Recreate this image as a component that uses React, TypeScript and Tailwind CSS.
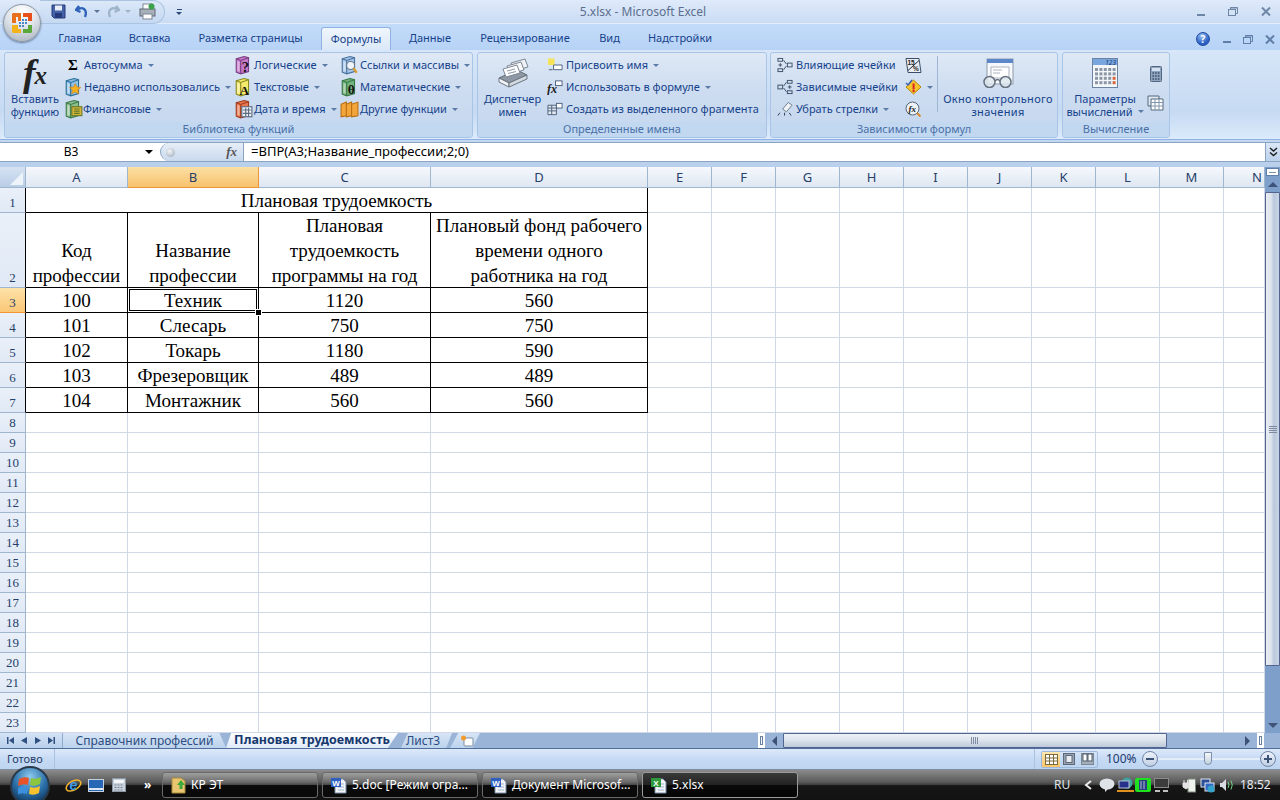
import type { ReactNode } from "react";

const UI = "font-['Noto_Sans','Open_Sans',sans-serif]";

function Caret({ color = "#5a7aa8" }: { color?: string }) {
  return <span className="ml-[5px] inline-block h-0 w-0 shrink-0 border-x-[3px] border-t-[3px] border-x-transparent" style={{ borderTopColor: color }} />;
}

function Book({ fill, spine, children }: { fill: string; spine: string; children?: ReactNode }) {
  return (
    <svg width="19" height="19" viewBox="0 0 17 17" className="shrink-0">
      <path d="M2 2.5 L9 .5 L13 1.5 L13 14 L6 16 L2 14.5 Z" fill={fill} stroke={spine} strokeWidth="1" />
      <path d="M2 2.5 L6 4 L13 1.5 M6 4 L6 16" fill="none" stroke={spine} strokeWidth="1" />
      <path d="M3 4.5 L5 5.2 V14 L3 13.4 Z" fill="#ffffff" fillOpacity=".45" />
      {children}
    </svg>
  );
}

function FxBig() {
  return (
    <span className="flex h-[34px] w-[36px] items-center justify-center font-['Liberation_Serif',serif] text-[38px] font-bold italic leading-none text-[#222]">
      f<span className="-ml-[1px] mt-[5px] text-[25px]">x</span>
    </span>
  );
}

function NameManagerIcon() {
  return (
    <svg width="32" height="30" viewBox="0 0 32 30">
      <path d="M2 20 L20 12 L30 17 L12 25 Z" fill="#8d98a4" stroke="#5f6a76" />
      <path d="M2 20 L12 25 L12 29 L2 24 Z" fill="#f2f4f7" stroke="#6b7580" />
      <path d="M12 25 L30 17 L30 21 L12 29 Z" fill="#d3d9e0" stroke="#6b7580" />
      <path d="M14 5 L28 1 L31 9 L17 13 Z" fill="#eef1f5" stroke="#7c8794" />
      <path d="M10 8 L24 4 L27 12 L13 16 Z" fill="#f8f9fb" stroke="#7c8794" />
      <path d="M6 11 L20 7 L23 15 L9 19 Z" fill="#ffffff" stroke="#7c8794" />
      <path d="M10 13 L18 11 M11 15.5 L19 13.5" stroke="#8a97a6" />
    </svg>
  );
}

function WatchIcon() {
  return (
    <svg width="32" height="30" viewBox="0 0 32 30">
      <rect x="5" y="1" width="26" height="25" fill="#f6f8fb" stroke="#8d9bac" />
      <rect x="5" y="1" width="26" height="4" fill="#5c87c9" />
      <path d="M9 9 H27 V20 H9 Z" fill="#fff" stroke="#a9b4c1" />
      <path d="M11 12 H20 M11 15 H18" stroke="#a9b4c1" />
      <circle cx="7.5" cy="24" r="5.5" fill="#dfe7ef" fillOpacity=".8" stroke="#66727f" strokeWidth="1.5" />
      <circle cx="23.5" cy="24" r="5.5" fill="#dfe7ef" fillOpacity=".8" stroke="#66727f" strokeWidth="1.5" />
      <path d="M13 23 Q15.5 20 18 23" fill="none" stroke="#66727f" strokeWidth="1.5" />
    </svg>
  );
}

function CalcOptionsIcon() {
  const cells = [0, 1, 2, 3, 4];
  return (
    <svg width="26" height="30" viewBox="0 0 26 30">
      <rect x=".5" y=".5" width="25" height="29" fill="#f3f6fa" stroke="#6b84a4" />
      <path d="M1 1 H25 V7 H1 Z" fill="#7aa6e0" />
      <text x="24" y="7" textAnchor="end" fontSize="6.5" fontStyle="italic" fill="#173a70">123</text>
      {cells.map((c) => [0, 1, 2, 3].map((r) => (
        <rect key={`${c}-${r}`} x={3 + c * 4.4} y={10 + r * 4.4} width="3" height="3" fill={c === 4 && r > 1 ? "#d8653a" : "#8c97a5"} />
      )))}
    </svg>
  );
}

function OfficeOrb() {
  return (
    <div className="absolute left-[3px] top-[4px] flex h-[38px] w-[38px] items-center justify-center rounded-full border border-[#8f9aa8] bg-[radial-gradient(circle_at_50%_20%,#ffffff,#dfe4ea_45%,#a3adb9_100%)] shadow-[0_1px_2px_rgba(40,60,90,.6)]">
      <svg width="24" height="24" viewBox="0 0 24 24">
        <path d="M3 2 H11 V10 H8 V6 H6 V12 H2 V3 Z" fill="#e8701a" />
        <path d="M13 2 H22 V10 H18 V6 H13 Z" fill="#e8501a" />
        <path d="M2 14 H8 V18 H11 V22 H3 L2 21 Z" fill="#f2b31c" />
        <path d="M18 14 H22 V21 L21 22 H13 V18 H18 Z" fill="#5aa83a" />
        <g fill="#4a86c5">
          <rect x="12" y="8" width="2" height="2" /><rect x="15" y="8" width="2" height="2" />
          <rect x="9" y="11" width="2" height="2" /><rect x="12" y="11" width="2" height="2" /><rect x="15" y="11" width="2" height="2" />
          <rect x="9" y="14" width="2" height="2" /><rect x="12" y="14" width="2" height="2" />
        </g>
      </svg>
    </div>
  );
}

function QuickAccess() {
  return (
    <div className="ml-[40px] flex h-[24px] w-[125px] items-center rounded-r-[12px] border border-l-0 border-[#aac3e2] bg-[linear-gradient(#dbe8f8,#c5d9f2)] pl-[11px]">
      <svg width="15" height="15" viewBox="0 0 15 15">
        <path d="M1 1 H14 V14 H3 L1 12 Z" fill="#4561a8" stroke="#26397a" />
        <rect x="4" y="1.5" width="7" height="5" fill="#e8eef8" />
        <rect x="4" y="9" width="7" height="5" fill="#26397a" />
      </svg>
      <svg width="14" height="14" viewBox="0 0 14 14" className="ml-[9px]">
        <path d="M4 1 L1 5 L5.5 7 M2 5 C7 1 13 4 10 12" fill="none" stroke="#2f63b8" strokeWidth="2.4" />
      </svg>
      <Caret color="#5c7296" />
      <svg width="14" height="14" viewBox="0 0 14 14" className="ml-[6px]">
        <path d="M10 1 L13 5 L8.5 7 M12 5 C7 1 1 4 4 12" fill="none" stroke="#9fb3c9" strokeWidth="2.4" />
      </svg>
      <Caret color="#9eb1c8" />
      <svg width="17" height="17" viewBox="0 0 17 17" className="ml-[8px]">
        <rect x="4" y="1" width="9" height="6" fill="#fff" stroke="#7d8794" />
        <rect x="1" y="6" width="15" height="7" fill="#a7b0bb" stroke="#5e6874" />
        <rect x="4" y="11" width="9" height="5" fill="#fff" stroke="#7d8794" />
        <circle cx="12.5" cy="3.5" r="3" fill="#3aa04a" />
      </svg>
    </div>
  );
}

function TitleBar() {
  return (
    <div className="flex h-[24px] items-center border-b border-[#e4eefa] bg-[linear-gradient(#dfeafa,#cadcf3)]">
      <QuickAccess />
      <div className="ml-[9px] flex w-[10px] flex-col items-center gap-[2px]">
        <span className="h-px w-[5px] bg-[#2b4a78]" />
        <span className="h-0 w-0 border-x-[3px] border-t-[3px] border-x-transparent border-t-[#2b4a78]" />
      </div>
      <div className="ml-[379px] w-[160px] whitespace-nowrap text-center text-[12px] text-[#5c6f8e]">5.xlsx - Microsoft Excel</div>
      <WindowButtons className="ml-[474px] gap-[23px]" dark={false} />
    </div>
  );
}

function WindowButtons({ className, dark }: { className: string; dark: boolean }) {
  const c = dark ? "#5f7fa6" : "#6e86a6";
  return (
    <div className={`flex items-center ${className}`}>
      <span className="mt-[6px] h-[2px] w-[8px]" style={{ background: c }} />
      <svg width="10" height="9" viewBox="0 0 10 9">
        <rect x=".5" y="2.5" width="7" height="6" fill="none" stroke={c} />
        <path d="M2.5 2.5 V.5 H9.5 V6.5 H7.5 M2.5 1 H9.5" fill="none" stroke={c} />
      </svg>
      <svg width="10" height="9" viewBox="0 0 10 9">
        <path d="M1 .5 L9 8.5 M9 .5 L1 8.5" stroke={c} strokeWidth="2" />
      </svg>
    </div>
  );
}

function TabsRow() {
  const tabs = [
    { t: "Главная", w: "w-[70px]" },
    { t: "Вставка", w: "w-[69px]" },
    { t: "Разметка страницы", w: "w-[133px]" },
    { t: "Формулы", w: "ml-[4px] w-[70px]", active: true },
    { t: "Данные", w: "w-[78px]" },
    { t: "Рецензирование", w: "w-[112px]" },
    { t: "Вид", w: "w-[57px]" },
    { t: "Надстройки", w: "w-[84px]" },
  ];
  return (
    <div className="flex h-[26px] items-end bg-[linear-gradient(#c4dcf9,#b6d2f6)] pl-[45px]">
      {tabs.map((x) => (
        <div key={x.t} className={`${x.w} flex h-[23px] items-center justify-center text-[11px] text-[#15428b] ${x.active ? "rounded-t-[3px] border border-b-0 border-[#8db2e3] bg-[linear-gradient(#f0f6fd,#dbe8f8)]" : ""}`}>
          {x.t}
        </div>
      ))}
      <div className="ml-auto mb-[4px] flex items-center pr-[5px]">
        <span className="flex h-[14px] w-[14px] items-center justify-center rounded-full border border-[#1f4aa0] bg-[radial-gradient(circle_at_40%_25%,#9cc2f2,#2a5fc4_65%)] text-[10px] font-bold leading-none text-white">?</span>
        <WindowButtons className="ml-[13px] gap-[12px]" dark />
      </div>
    </div>
  );
}

function Group({ w, ml, label, children }: { w: string; ml: string; label: string; children: ReactNode }) {
  return (
    <div className={`${w} ${ml} flex h-[86px] shrink-0 flex-col overflow-hidden rounded-[3px] border border-[#a8c4e6] bg-[linear-gradient(#dfe9f6,#cddcf0_45%,#c5d8ef)]`}>
      <div className="flex h-[69px]">{children}</div>
      <div className="flex h-[15px] items-center justify-center bg-[#c1d8f0] text-[11px] text-[#4a70a8]">{label}</div>
    </div>
  );
}

function Row({ icon, text, caret = true, gap = "ml-[3px]" }: { icon: ReactNode; text: string; caret?: boolean; gap?: string }) {
  return (
    <div className="flex h-[22px] items-center whitespace-nowrap text-[11px] text-[#15428b]">
      <span className="flex w-[16px] shrink-0 items-center justify-center">{icon}</span>
      <span className={gap}>{text}</span>
      {caret && <Caret />}
    </div>
  );
}

function BigButton({ w, icon, lines, caret }: { w: string; icon: ReactNode; lines: string[]; caret?: boolean }) {
  return (
    <div className={`${w} flex shrink-0 flex-col items-center text-center text-[11px] leading-[13px] text-[#15428b]`}>
      <div className="flex h-[39px] items-center justify-center">{icon}</div>
      <div className="whitespace-nowrap">{lines[0]}</div>
      <div className="flex items-center whitespace-nowrap">{lines[1]}{caret && <Caret />}</div>
    </div>
  );
}

function Ribbon() {
  return (
    <div className="flex h-[90px] items-start border-b border-[#8db2e3] bg-[linear-gradient(#d7e6f8,#c6daf2_70%,#dcebfb)] pt-[2px]">
      <Group w="w-[469px]" ml="ml-[4px]" label="Библиотека функций">
        <BigButton w="w-[60px]" icon={<FxBig />} lines={["Вставить", "функцию"]} />
        <div className="w-[170px] pt-px">
          <Row text="Автосумма" icon={<span className="font-['Liberation_Serif',serif] text-[15px] font-bold leading-none text-black">Σ</span>} />
          <Row text="Недавно использовались" icon={<Book fill="#8fc0e8" spine="#2c6f99"><path d="M10 5 L11.5 8 L15 8.4 L12.5 10.8 L13.2 14.2 L10 12.5 L6.8 14.2 L7.5 10.8 L5 8.4 L8.5 8 Z" fill="#f4b01e" stroke="#c57a10" strokeWidth=".5" /></Book>} />
          <Row text="Финансовые" gap="ml-[2px]" icon={<Book fill="#8dbf8d" spine="#3d7a4a"><rect x="7" y="6" width="9" height="8" fill="#d8b436" stroke="#6a7a2a" /><path d="M9 8 H14 M9 10 H14 M9 12 H14" stroke="#5a7a2a" /></Book>} />
        </div>
        <div className="w-[106px] pt-px">
          <Row text="Логические" icon={<Book fill="#c67ac8" spine="#7a3f85"><text x="7" y="14.5" fontSize="13" fontWeight="700" fill="#111" fontFamily="Liberation Serif">?</text></Book>} />
          <Row text="Текстовые" icon={<Book fill="#f5ea6c" spine="#8a8a20"><text x="5" y="15" fontSize="12" fontWeight="700" fill="#111" fontFamily="Liberation Serif">A</text></Book>} />
          <Row text="Дата и время" icon={<Book fill="#e8764e" spine="#a33c1e"><rect x="7" y="6" width="9" height="9" fill="#eef2f8" stroke="#5a6a80" /><path d="M8 9 H15 M8 12 H15 M10.5 7 V15 M13 7 V15" stroke="#5a6a80" /></Book>} />
        </div>
        <div className="w-[127px] pt-px">
          <Row text="Ссылки и массивы" icon={<Book fill="#a5c5e8" spine="#4a72a0"><circle cx="9.5" cy="8.5" r="3.6" fill="#eef4fa" stroke="#66788c" /><path d="M12 11 L15 15" stroke="#d99a2a" strokeWidth="2" /></Book>} />
          <Row text="Математические" icon={<Book fill="#74b27c" spine="#3a7a48"><text x="7" y="14.5" fontSize="12" fontWeight="700" fill="#111" fontFamily="Liberation Serif">θ</text></Book>} />
          <Row text="Другие функции" icon={<svg width="19" height="17" viewBox="0 0 18 16" className="shrink-0"><path d="M1 3 L6 1 L6 14 L1 15 Z M6 3 L11 1 L11 14 L6 15 Z M11 3 L17 1 L17 14 L11 15 Z" fill="#f3a53c" stroke="#b86e10" /></svg>} />
        </div>
      </Group>
      <Group w="w-[290px]" ml="ml-[4px]" label="Определенные имена">
        <BigButton w="w-[69px]" icon={<NameManagerIcon />} lines={["Диспетчер", "имен"]} />
        <div className="pt-px">
          <Row text="Присвоить имя" icon={<svg width="17" height="16" viewBox="0 0 17 16"><rect x="1" y="1" width="7" height="7" fill="#f7e35a" /><path d="M2 13 H6 M7 8 H16 V13 H7 Z" fill="#fff" stroke="#4a5f7c" /></svg>} />
          <Row text="Использовать в формуле" icon={<svg width="17" height="16" viewBox="0 0 17 16"><text x="0" y="14" fontSize="13" fontWeight="700" fontStyle="italic" fill="#222" fontFamily="Liberation Serif">fx</text><rect x="9" y="1.5" width="7" height="5" fill="#fff" stroke="#4a5f7c" /></svg>} />
          <Row text="Создать из выделенного фрагмента" caret={false} icon={<svg width="17" height="14" viewBox="0 0 17 14"><path d="M1 3 H10 V13 H1 Z" fill="#e4e9f0" stroke="#4a5f7c" /><path d="M1 6 H10 M1 9 H10 M5 3 V13" stroke="#4a5f7c" /><rect x="10" y="1" width="6" height="5" fill="#fff" stroke="#4a5f7c" /></svg>} />
        </div>
      </Group>
      <Group w="w-[288px]" ml="ml-[3px]" label="Зависимости формул">
        <div className="w-[134px] shrink-0 pl-[6px] pt-px">
          <Row text="Влияющие ячейки" caret={false} icon={<svg width="17" height="16" viewBox="0 0 17 16" fill="none" stroke="#3d4f66"><rect x="1" y="1" width="5" height="3" /><rect x="1" y="12" width="5" height="3" /><path d="M3.5 6 V10 M1.5 8 H5.5 M7 3 L10 7 M7 13 L10 9" /><rect x="11" y="6" width="5" height="4" /></svg>} />
          <Row text="Зависимые ячейки" caret={false} icon={<svg width="17" height="16" viewBox="0 0 17 16" fill="none" stroke="#3d4f66"><rect x="1" y="6" width="5" height="4" /><path d="M7 7 L10 3 M7 9 L10 13 M13.5 6 V10 M11.5 8 H15.5" /><rect x="11" y="1" width="5" height="3" /><rect x="11" y="12" width="5" height="3" /></svg>} />
          <Row text="Убрать стрелки" icon={<svg width="17" height="16" viewBox="0 0 17 16"><path d="M6 8 L12 1 L16 4 L10 11 Z" fill="#f1f3f6" stroke="#69788a" /><path d="M1 15 L3 12 M8 15 V12 M15 15 L13 12" stroke="#2c3a4c" /></svg>} />
        </div>
        <div className="flex w-[32px] shrink-0 flex-col items-start pt-px">
          <div className="flex h-[22px] items-center"><svg width="17" height="17" viewBox="0 0 17 16"><path d="M1 1 H14 L16 15 H3 Z" fill="#e8edf3" stroke="#3d4f66" /><text x="2.5" y="7.5" fontSize="6.5" fontWeight="700" fill="#222" fontFamily="Liberation Sans">15</text><text x="8" y="13.5" fontSize="6.5" fontWeight="700" fill="#222" fontFamily="Liberation Sans">%</text><path d="M3 13 L14 3" stroke="#1e2a3a" strokeWidth="1" /></svg></div>
          <div className="flex h-[22px] items-center"><svg width="17" height="16" viewBox="0 0 17 16"><path d="M8.5 1 L16 8 L8.5 15 L1 8 Z" fill="#f4c42e" stroke="#b8860b" /><rect x="7.6" y="4.5" width="2" height="6" fill="#d22" /><rect x="7.6" y="11" width="2" height="2" fill="#d22" /><path d="M1 4 L3 6 L7 1" fill="none" stroke="#3a62b8" strokeWidth="1.5" /></svg><Caret /></div>
          <div className="flex h-[22px] items-center"><svg width="17" height="16" viewBox="0 0 17 16"><circle cx="7.5" cy="7.5" r="6.5" fill="#eef2f6" stroke="#55667a" /><text x="3.5" y="11" fontSize="9" fontWeight="700" fontStyle="italic" fontFamily="Liberation Serif" fill="#222">fx</text><path d="M12 12 L15.5 15.5" stroke="#d78a2a" strokeWidth="2" /></svg></div>
        </div>
        <div className="my-[3px] h-[56px] w-px shrink-0 bg-[#9db6d6]" />
        <BigButton w="w-[120px] tracking-[.3px]" icon={<WatchIcon />} lines={["Окно контрольного", "значения"]} />
      </Group>
      <Group w="w-[108px]" ml="ml-[4px]" label="Вычисление">
        <BigButton w="w-[84px]" icon={<CalcOptionsIcon />} lines={["Параметры", "вычислений"]} caret />
        <div className="flex flex-col items-center pt-px">
          <div className="flex h-[28px] items-end"><svg width="12" height="16" viewBox="0 0 12 16"><rect x=".5" y=".5" width="11" height="15" rx="1" fill="#8ea4c0" stroke="#55687f" /><rect x="2" y="2" width="8" height="3" fill="#d4e1f0" /><path d="M2.5 7 H9.5 M2.5 10 H9.5 M2.5 13 H9.5" stroke="#3a4c64" strokeDasharray="1.5 1.2" strokeWidth="1.5" /></svg></div>
          <div className="mt-[13px] flex items-center"><svg width="17" height="17" viewBox="0 0 17 17"><path d="M1 1 H12 V11 H1 Z" fill="#dfe8f2" stroke="#55687f" /><path d="M4 4 H16 V15 H4 Z" fill="#fff" stroke="#55687f" /><path d="M4 7.5 H16 M4 11 H16 M8 4 V15 M12 4 V15" stroke="#8296ad" /></svg></div>
        </div>
      </Group>
    </div>
  );
}

function FormulaBar() {
  return (
    <div className="h-[27px] bg-[linear-gradient(#c4d8f0,#b8cfeb)] pt-[2px]">
      <div className="flex h-[20px] border-y border-[#8aa4c2] bg-white">
        <div className="relative flex w-[160px] shrink-0 items-center justify-center pr-[18px] text-[12px] text-black">
          B3
          <span className="absolute left-[145px] top-[7px] h-0 w-0 border-x-[4px] border-t-[4px] border-x-transparent border-t-black" />
        </div>
        <div className="flex w-[84px] shrink-0 items-center justify-between rounded-l-[9px] border-x border-[#8aa4c2] bg-[linear-gradient(#e7eef8,#c9d9ee)] pl-[5px] pr-[6px]">
          <span className="h-[9px] w-[9px] rounded-full bg-[radial-gradient(circle_at_40%_35%,#f4f6f8,#9aa6b4)]" />
          <span className="font-['Liberation_Serif',serif] text-[13px] font-bold italic text-[#555]">fx</span>
        </div>
        <div className="flex min-w-0 flex-1 items-center pl-[7px] text-[13px] text-black">=ВПР(А3;Название_профессии;2;0)</div>
        <div className="flex w-[15px] shrink-0 items-center justify-center border-l border-[#8aa4c2] bg-[linear-gradient(#dbe7f6,#bcd1ec)]">
          <svg width="9" height="10" viewBox="0 0 9 10" fill="none" stroke="#222" strokeWidth="1.5"><path d="M1 1 L4.5 4 L8 1 M1 5.5 L4.5 8.5 L8 5.5" /></svg>
        </div>
      </div>
    </div>
  );
}

const cols = [
  { k: "A", w: "w-[102px]" }, { k: "B", w: "w-[131px]" }, { k: "C", w: "w-[172px]" }, { k: "D", w: "w-[217px]" },
  { k: "E", w: "w-[64px]" }, { k: "F", w: "w-[64px]" }, { k: "G", w: "w-[64px]" }, { k: "H", w: "w-[64px]" },
  { k: "I", w: "w-[64px]" }, { k: "J", w: "w-[64px]" }, { k: "K", w: "w-[64px]" }, { k: "L", w: "w-[64px]" },
  { k: "M", w: "w-[64px]" }, { k: "N", w: "w-[41px]" },
];
const restCols = cols.slice(4);

const body = [
  ["100", "Техник", "1120", "560"],
  ["101", "Слесарь", "750", "750"],
  ["102", "Токарь", "1180", "590"],
  ["103", "Фрезеровщик", "489", "489"],
  ["104", "Монтажник", "560", "560"],
];

const head = [
  ["Код", "профессии"],
  ["Название", "профессии"],
  ["Плановая", "трудоемкость", "программы на год"],
  ["Плановый фонд рабочего", "времени одного", "работника на год"],
];

function RowHeader({ n, active, inTable }: { n: number; active?: boolean; inTable?: boolean }) {
  return (
    <div className={`flex w-[26px] shrink-0 items-end justify-center border-b border-r pb-px text-[13px] leading-[16px] ${active ? "border-b-[#f29536] bg-[linear-gradient(#fde3a8,#fbc777)] text-[#26406a]" : "border-b-[#9eb6ce] bg-[linear-gradient(#eaf0f9,#e0e9f5)] text-[#26406a]"} ${inTable ? "border-r-black" : "border-r-[#9eb6ce]"}`}>
      {n}
    </div>
  );
}

function RestCells() {
  return (
    <>
      {restCols.map((c) => <div key={c.k} className={`${c.w} shrink-0 border-b border-r border-[#d0d7e5]`} />)}
    </>
  );
}

function Sheet() {
  const emptyRows = Array.from({ length: 16 }, (_, i) => i + 8);
  return (
    <div className="w-[1265px] shrink-0 bg-white font-['Liberation_Serif',serif] text-[19px] leading-[25px] text-black">
      <div className={`flex h-[21px] ${UI}`}>
        <div className="flex w-[26px] shrink-0 items-end justify-end border-b border-r border-[#9eb6ce] bg-[linear-gradient(#d5e2f2,#b9cde6)] p-[2px]">
          <span className="h-0 w-0 border-b-[13px] border-l-[13px] border-b-[#eef3fa] border-l-transparent" />
        </div>
        {cols.map((c) => (
          <div key={c.k} className={`${c.w} flex shrink-0 items-center border-b border-r text-[13px] text-[#26406a] ${c.k === "N" ? "justify-start pl-[28px]" : "justify-center"} ${c.k === "B" ? "border-[#f29536] bg-[linear-gradient(#fbe0a4,#f8c26d)]" : "border-[#9eb6ce] bg-[linear-gradient(#f5f8fc,#dfe7f2)]"}`}>
            {c.k}
          </div>
        ))}
      </div>

      <div className="flex h-[25px]">
        <RowHeader n={1} inTable />
        <div className="flex w-[622px] shrink-0 items-center justify-center whitespace-nowrap border-b border-r border-black">Плановая трудоемкость</div>
        <RestCells />
      </div>

      <div className="flex h-[75px]">
        <RowHeader n={2} inTable />
        {head.map((lines, i) => (
          <div key={i} className={`${cols[i].w} flex shrink-0 flex-col items-center justify-end border-b border-r border-black`}>
            <div className="-mb-px flex flex-col items-center">
              {lines.map((l) => <div key={l} className="whitespace-nowrap">{l}</div>)}
            </div>
          </div>
        ))}
        <RestCells />
      </div>

      {body.map((row, r) => (
        <div key={r} className="flex h-[25px]">
          <RowHeader n={r + 3} active={r === 0} inTable />
          {row.map((v, i) => (
            <div key={i} className={`${cols[i].w} relative flex shrink-0 items-center justify-center border-b border-r border-black`}>
              {r === 0 && i === 1 && (
                <>
                  <span className="absolute inset-0 border border-white" />
                  <span className="absolute inset-px border border-black" />
                  <span className="absolute bottom-[-3px] right-[-3px] z-10 h-[5px] w-[5px] bg-black outline outline-1 outline-white" />
                </>
              )}
              {v}
            </div>
          ))}
          <RestCells />
        </div>
      ))}

      {emptyRows.map((n) => (
        <div key={n} className="flex h-[20px]">
          <RowHeader n={n} />
          {cols.map((c) => <div key={c.k} className={`${c.w} shrink-0 border-b border-r border-[#d0d7e5]`} />)}
        </div>
      ))}
    </div>
  );
}

function VScroll() {
  return (
    <div className="flex w-[15px] shrink-0 flex-col bg-[#7f9fcb]">
      <div className="mx-[1px] mt-[1px] flex h-[8px] items-center justify-center border border-[#5f7fa8] bg-white">
        <span className="h-px w-[7px] bg-[#7f93ad]" />
      </div>
      <div className="flex h-[16px] items-center justify-center">
        <span className="h-0 w-0 border-x-[5px] border-b-[5px] border-x-transparent border-b-[#3f5378]" />
      </div>
      <div className="flex h-[474px] flex-col items-center justify-center gap-[1px] rounded-[1px] border border-[#52648f] bg-[linear-gradient(90deg,#e8edf3,#dde3ec_40%,#b9c8dc_60%,#c9d5e5)]">
        <span className="h-px w-[8px] bg-[#7f8ba0]" />
        <span className="h-px w-[8px] bg-[#7f8ba0]" />
        <span className="h-px w-[8px] bg-[#7f8ba0]" />
        <span className="h-px w-[8px] bg-[#7f8ba0]" />
      </div>
      <div className="flex flex-1 items-end justify-center pb-[5px]">
        <span className="h-0 w-0 border-x-[5px] border-t-[5px] border-x-transparent border-t-[#3f5378]" />
      </div>
    </div>
  );
}

function SheetTabs() {
  return (
    <div className="flex h-[16px] items-stretch border-b border-[#4e6e9c] bg-[#9ab4d8] text-[12px] leading-none">
      <div className="flex w-[62px] shrink-0 items-center justify-around bg-[linear-gradient(#d4e3f6,#b8cfeb)] px-[3px]">
        <svg width="7" height="7" viewBox="0 0 7 7" fill="#2f4f80"><path d="M0 0 H1.5 V7 H0 Z M7 0 V7 L2 3.5 Z" /></svg>
        <svg width="6" height="7" viewBox="0 0 6 7" fill="#2f4f80"><path d="M6 0 V7 L0 3.5 Z" /></svg>
        <svg width="6" height="7" viewBox="0 0 6 7" fill="#2f4f80"><path d="M0 0 V7 L6 3.5 Z" /></svg>
        <svg width="7" height="7" viewBox="0 0 7 7" fill="#2f4f80"><path d="M5.5 0 H7 V7 H5.5 Z M0 0 V7 L5 3.5 Z" /></svg>
      </div>
      <div className="flex w-[164px] shrink-0 items-center justify-center border-l border-[#8eabd0] bg-[linear-gradient(#d7e5f6,#bcd2ec)] text-[#2c4d80] [clip-path:polygon(0_0,96%_0,100%_100%,0_100%)]">Справочник профессий</div>
      <div className="flex w-[172px] shrink-0 items-center justify-center bg-[linear-gradient(#ffffff,#dfeafa)] text-[12.5px] font-bold text-[#15386e] [clip-path:polygon(0_100%,3%_0,100%_0,94%_100%)]">Плановая трудоемкость</div>
      <div className="-ml-[4px] flex w-[58px] shrink-0 items-center justify-center bg-[linear-gradient(#d7e5f6,#bcd2ec)] text-[#2c4d80] [clip-path:polygon(12%_100%,24%_0,100%_0,90%_100%)]">Лист3</div>
      <div className="-ml-[6px] flex w-[34px] shrink-0 items-center justify-center bg-[linear-gradient(#d7e5f6,#bcd2ec)] pl-[8px] [clip-path:polygon(12%_100%,36%_0,100%_0,78%_100%)]">
        <svg width="14" height="12" viewBox="0 0 14 12"><rect x="4" y="3" width="9" height="8" rx="1" fill="#fff" stroke="#7d8da3" /><circle cx="3.5" cy="3" r="2.5" fill="#f19b2c" /></svg>
      </div>
      <div className="flex-1" />
      <div className="flex w-[7px] shrink-0 items-center justify-center bg-white"><span className="h-[9px] w-[3px] border border-[#6a7f9d]" /></div>
      <div className="flex w-[18px] shrink-0 items-center justify-center"><span className="h-0 w-0 border-y-[5px] border-r-[5px] border-y-transparent border-r-[#3f5378]" /></div>
      <div className="flex w-[384px] shrink-0 items-center justify-center rounded-[1px] border border-[#52648f] bg-[linear-gradient(#eef2f7,#dfe5ed_45%,#bcc9da)]">
        <span className="h-[7px] w-[8px] bg-[repeating-linear-gradient(90deg,#7f8ba0_0,#7f8ba0_1px,transparent_1px,transparent_2px)]" />
      </div>
      <div className="flex w-[90px] shrink-0 items-center justify-end pr-[7px]"><span className="h-0 w-0 border-y-[5px] border-l-[5px] border-y-transparent border-l-[#3f5378]" /></div>
      <div className="mr-[16px] flex w-[7px] shrink-0 items-center justify-center bg-white"><span className="h-[9px] w-[3px] border border-[#6a7f9d]" /></div>
    </div>
  );
}

function StatusBar() {
  return (
    <div className="flex h-[21px] items-center border-b border-[#7d8ea3] bg-[linear-gradient(#dde9f9,#c6daf4_50%,#bdd4f0)] text-[#15386e]">
      <div className="flex h-full w-[55px] items-center border-r border-[#a9c2e2] pl-[7px] text-[11px] text-[#26406a]">Готово</div>
      <div className="ml-[979px] flex h-full w-[246px] items-center border-l border-[#a9c2e2] pl-[6px]">
        <div className="flex h-[17px] w-[57px] items-center overflow-hidden rounded-[2px] border border-[#9db8da]">
          <div className="flex h-full w-[19px] items-center justify-center bg-[linear-gradient(#fde8b0,#f9c66a)]">
            <svg width="13" height="11" viewBox="0 0 13 11"><rect x=".5" y=".5" width="12" height="10" fill="#fff" stroke="#7a6a3a" /><path d="M.5 4 H12.5 M.5 7 H12.5 M4.5 .5 V10.5 M8.5 .5 V10.5" stroke="#7a6a3a" /></svg>
          </div>
          <div className="flex h-full w-[19px] items-center justify-center"><svg width="12" height="12" viewBox="0 0 12 12"><rect x=".5" y=".5" width="11" height="11" fill="#98a4b3" stroke="#5d6978" /><rect x="3" y="2.5" width="6" height="7" fill="#e9edf2" stroke="#5d6978" /></svg></div>
          <div className="flex h-full w-[19px] items-center justify-center"><svg width="13" height="12" viewBox="0 0 13 12"><rect x=".5" y=".5" width="12" height="11" fill="#a4aebb" stroke="#7c8796" /><rect x="2" y="1" width="4" height="7" fill="#fff" stroke="#4e5a68" /><rect x="7" y="1" width="4" height="7" fill="#fff" stroke="#4e5a68" /></svg></div>
        </div>
        <span className="ml-[8px] w-[36px] text-[12px] text-[#1d3a70]">100%</span>
        <span className="flex h-[16px] w-[16px] shrink-0 items-center justify-center rounded-full border border-[#6f86a6] bg-[linear-gradient(#eef3fa,#c0cfe3)]"><span className="h-[2px] w-[8px] bg-[#3d5478]" /></span>
        <div className="relative h-[2px] w-[102px] bg-[#e3edf9]">
          <span className="absolute left-[46px] top-[-6px] h-[13px] w-[8px] rounded-b-[4px] border border-[#7c90ab] bg-[linear-gradient(#f3f6fa,#c6d3e3)]" />
        </div>
        <span className="relative flex h-[16px] w-[16px] shrink-0 items-center justify-center rounded-full border border-[#6f86a6] bg-[linear-gradient(#eef3fa,#c0cfe3)]">
          <span className="h-[2px] w-[8px] bg-[#3d5478]" /><span className="absolute h-[8px] w-[2px] bg-[#3d5478]" />
        </span>
      </div>
    </div>
  );
}

function DocIcon({ color, letter }: { color: string; letter: string }) {
  return (
    <svg width="16" height="17" viewBox="0 0 16 17" className="shrink-0">
      <path d="M4 2 H12 L15 5 V16 H4 Z" fill="#f2f6fb" stroke="#7b8ea8" />
      <path d="M7 7 H13 M7 10 H13 M7 13 H13" stroke="#9fb2c8" />
      <rect x="0" y="1" width="10" height="9" fill={color} />
      <text x="5" y="9" textAnchor="middle" fontSize="8" fontWeight="700" fill="#fff" fontFamily="Liberation Sans">{letter}</text>
    </svg>
  );
}

function TaskButton({ icon, text, active, ml }: { icon: ReactNode; text: string; active?: boolean; ml: string }) {
  return (
    <div className={`${ml} flex h-[26px] w-[156px] shrink-0 items-center gap-[5px] rounded-[3px] border pl-[8px] text-[12px] text-white ${active ? "border-[#9a9a9a] bg-[linear-gradient(#3a3a3a,#222_50%,#0a0a0a_50%,#050505)]" : "border-[#6a6a6a] bg-[linear-gradient(rgba(255,255,255,.25),rgba(255,255,255,.05)_50%,rgba(0,0,0,.5)_50%,rgba(0,0,0,.5))]"}`}>
      {icon}
      <span className="whitespace-nowrap">{text}</span>
    </div>
  );
}

function Taskbar() {
  return (
    <div className="relative flex h-[30px] items-center bg-[linear-gradient(#8b8b8b,#5a5a5a_40%,#3a3a3a_50%,#151515_52%,#131313)]">
      <div className="absolute left-[10px] top-[-4px] flex h-[40px] w-[40px] items-center justify-center rounded-full border-2 border-[#2b3a4a] bg-[radial-gradient(circle_at_50%_25%,#8ecbf0,#2a6fa8_50%,#0b2c50_90%)]">
        <svg width="24" height="22" viewBox="0 0 24 22">
          <path d="M1 4 Q6 1 11 3 L10 10 Q5 8 0 11 Z" fill="#e8532a" />
          <path d="M13 3 Q18 5 23 2 L22 9 Q17 12 12 10 Z" fill="#8cc63f" />
          <path d="M0 13 Q5 10 10 12 L9 19 Q4 17 -1 20 Z" fill="#3c8fdc" />
          <path d="M12 12 Q17 14 22 11 L21 18 Q16 21 11 19 Z" fill="#f8c22e" />
        </svg>
      </div>
      <svg width="17" height="17" viewBox="0 0 17 17" className="ml-[65px] shrink-0">
        <ellipse cx="8.5" cy="8.5" rx="8" ry="4.5" fill="none" stroke="#f3b52d" strokeWidth="1.5" transform="rotate(-30 8.5 8.5)" />
        <text x="8.5" y="13" textAnchor="middle" fontSize="14" fontWeight="700" fontStyle="italic" fill="#3f9be8" fontFamily="Liberation Sans">e</text>
      </svg>
      <svg width="16" height="13" viewBox="0 0 16 13" className="ml-[6px] shrink-0"><rect x=".5" y=".5" width="15" height="12" fill="#2767b5" stroke="#c6d2e0" /><path d="M1 10 H15" stroke="#dde6f0" strokeWidth="2" /></svg>
      <svg width="14" height="14" viewBox="0 0 14 14" className="ml-[8px] shrink-0"><rect x=".5" y=".5" width="13" height="13" fill="#c9d2dc" stroke="#8d98a5" /><rect x="2" y="2" width="10" height="3" fill="#f4f6f8" /><path d="M2.5 7 H11.5 M2.5 9.5 H11.5 M2.5 12 H11.5" stroke="#778393" strokeDasharray="2 1" /></svg>
      <span className="ml-[18px] w-[18px] text-[12px] font-bold leading-none text-white">»</span>
      <TaskButton ml="ml-[0px]" text="КР ЭТ" icon={<svg width="15" height="17" viewBox="0 0 15 17" className="shrink-0"><path d="M1 1 H10 L14 4 V16 H1 Z" fill="#e8c56e" stroke="#a98a3a" /><path d="M6 8 L10 3 L14 8 H11.5 V12 H8.5 V8 Z" fill="#3fa83c" /></svg>} />
      <TaskButton ml="ml-[4px]" text="5.doc [Режим огра..." icon={<DocIcon color="#2f5fc0" letter="W" />} />
      <TaskButton ml="ml-[4px]" text="Документ Microsof..." icon={<DocIcon color="#2f5fc0" letter="W" />} />
      <TaskButton ml="ml-[4px]" text="5.xlsx" active icon={<DocIcon color="#2f9a3c" letter="X" />} />
      <span className="ml-[256px] w-[16px] text-[12px] text-[#dfe3e8]">RU</span>
      <svg width="8" height="10" viewBox="0 0 8 10" className="ml-[14px] shrink-0"><path d="M7 1 L2 5 L7 9" fill="none" stroke="#e8ecf0" strokeWidth="2" /></svg>
      <svg width="16" height="14" viewBox="0 0 16 14" className="ml-[7px] shrink-0"><ellipse cx="8" cy="6" rx="7.5" ry="5.5" fill="#dfe3e7" /><path d="M6 10 L6 14 L10 10 Z" fill="#dfe3e7" /></svg>
      <svg width="17" height="16" viewBox="0 0 17 16" className="ml-[2px] shrink-0"><circle cx="10" cy="6" r="5.5" fill="#3ea3a0" /><rect x="2" y="4" width="10" height="7" fill="#26318a" stroke="#bcc4d6" /><path d="M0 14 H17" stroke="#e0901f" strokeWidth="2" /></svg>
      <svg width="16" height="14" viewBox="0 0 16 14" className="ml-[1px] shrink-0"><rect width="16" height="14" rx="2" fill="#1fe01f" /><rect x="4" y="2" width="8" height="10" fill="#2a3f80" /><path d="M6 3 V11 M9 3 V11" stroke="#b7c3dc" /></svg>
      <svg width="15" height="14" viewBox="0 0 15 14" className="ml-[3px] shrink-0"><rect x=".5" y=".5" width="14" height="9" fill="#3c3c3c" stroke="#8a8a8a" /><path d="M1 13 H6 M9 13 H14" stroke="#c0c0c0" strokeWidth="2" /></svg>
      <svg width="14" height="16" viewBox="0 0 14 16" className="ml-[13px] shrink-0"><rect x="6" y="2" width="7.5" height="13" fill="#eef3ee" stroke="#7a8a7a" /><path d="M1 6 H7 V10 L4 12 L1 10 Z M2 3 V6 M5.5 3 V6" fill="#e4e4e4" stroke="#e4e4e4" /></svg>
      <svg width="16" height="15" viewBox="0 0 16 15" className="ml-[4px] shrink-0"><rect x="1" y="1" width="9" height="8" fill="#2b4d96" stroke="#dfe6f0" /><rect x="5" y="5" width="9" height="8" fill="#3168c4" stroke="#dfe6f0" /><circle cx="11" cy="11" r="3.5" fill="#34a3c9" /></svg>
      <svg width="16" height="14" viewBox="0 0 16 14" fill="none" className="ml-[3px] shrink-0"><path d="M1 5 H3 L7 1 V13 L3 9 H1 Z" fill="#d8dde3" /><path d="M9 4 Q11 7 9 10 M12 2.5 Q14.5 7 12 11.5" stroke="#6fcf7f" /></svg>
      <span className="ml-[5px] whitespace-nowrap text-[12px] text-[#e9edf2]">18:52</span>
    </div>
  );
}

export default function App() {
  return (
    <div className={`relative flex h-[800px] w-[1280px] flex-col overflow-hidden bg-white ${UI}`}>
      <OfficeOrb />
      <TitleBar />
      <TabsRow />
      <Ribbon />
      <FormulaBar />
      <div className="flex h-[566px]">
        <Sheet />
        <VScroll />
      </div>
      <SheetTabs />
      <StatusBar />
      <Taskbar />
    </div>
  );
}
